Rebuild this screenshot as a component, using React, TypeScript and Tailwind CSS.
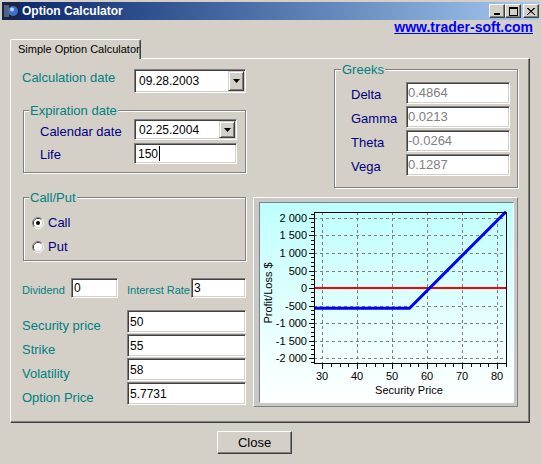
import React from 'react'

/** Sunken Win2000 edit box. */
function Edit({
  value,
  className = '',
  muted = false,
  caret = false,
}: {
  value: string
  className?: string
  muted?: boolean
  caret?: boolean
}) {
  return (
    <div
      className={`flex items-center border border-t-[#808080] border-l-[#808080] border-b-white border-r-white bg-white shadow-[inset_1px_1px_0_#404040,inset_-1px_-1px_0_#d4d0c8] ${
        muted ? 'text-[#808080]' : 'text-black'
      } ${className}`}
    >
      <span>{value}</span>
      {caret && <span className="ml-px h-[15px] w-px bg-black" />}
    </div>
  )
}

function Combo({ value, className = '' }: { value: string; className?: string }) {
  return (
    <div
      className={`flex items-stretch border border-t-[#808080] border-l-[#808080] border-b-white border-r-white bg-white p-px shadow-[inset_1px_1px_0_#404040,inset_-1px_-1px_0_#d4d0c8] ${className}`}
    >
      <span className="flex flex-1 items-center pl-[3px] text-[12px] text-black">{value}</span>
      <span className="flex w-[16px] items-center justify-center border border-t-[#d4d0c8] border-l-[#d4d0c8] border-r-[#404040] border-b-[#404040] bg-[#d4d0c8] shadow-[inset_1px_1px_0_#fff,inset_-1px_-1px_0_#808080]">
        <svg width="7" height="4" viewBox="0 0 7 4">
          <path d="M0 0h7L3.5 4z" fill="#000" />
        </svg>
      </span>
    </div>
  )
}

function Group({
  title,
  className = '',
  legendClass = 'ml-[5px]',
  children,
}: {
  title: string
  className?: string
  legendClass?: string
  children: React.ReactNode
}) {
  return (
    <div
      className={`flex flex-col border border-[#808080] shadow-[inset_1px_1px_0_#fff,1px_1px_0_#fff] ${className}`}
    >
      <span
        className={`-mt-[8px] w-fit bg-[#d4d0c8] px-px text-[13px] leading-[15px] text-[#008080] ${legendClass}`}
      >
        {title}
      </span>
      {children}
    </div>
  )
}

function Radio({ checked }: { checked?: boolean }) {
  return (
    <svg width="12" height="12" viewBox="0 0 12 12">
      <path d="M2.11 9.89A5.5 5.5 0 0 1 9.89 2.11" fill="none" stroke="#808080" />
      <path d="M9.89 2.11A5.5 5.5 0 0 1 2.11 9.89" fill="none" stroke="#fff" />
      <path d="M2.82 9.18A4.5 4.5 0 0 1 9.18 2.82" fill="none" stroke="#404040" />
      <path d="M9.18 2.82A4.5 4.5 0 0 1 2.82 9.18" fill="none" stroke="#d4d0c8" />
      <circle cx="6" cy="6" r="4" fill="#fff" />
      {checked && <circle cx="6" cy="6" r="2" fill="#000" />}
    </svg>
  )
}

function CaptionButton({ children }: { children: React.ReactNode }) {
  return (
    <div className="flex h-[14px] w-[16px] items-center justify-center border border-t-white border-l-white border-r-[#404040] border-b-[#404040] bg-[#d4d0c8] shadow-[inset_-1px_-1px_0_#808080]">
      {children}
    </div>
  )
}

function TitleBar() {
  return (
    <div className="mx-[2px] mt-[2px] flex h-[18px] items-center bg-linear-to-r from-[#0a246a] to-[#a6caf0] pl-px">
      <svg width="16" height="16" viewBox="0 0 16 16">
        <rect width="16" height="16" fill="#1d2536" />
        <rect x="1" y="2" width="5" height="12" fill="#56627a" />
        <circle cx="10" cy="8" r="5" fill="#3a6fd0" />
        <circle cx="9" cy="6.5" r="2" fill="#b8d4ff" />
      </svg>
      <span className="ml-[3px] text-[12px] leading-none font-bold text-white">Option Calculator</span>
      <div className="ml-auto flex">
        <CaptionButton>
          <svg width="8" height="7" viewBox="0 0 8 7">
            <rect x="1" y="5" width="6" height="2" fill="#000" />
          </svg>
        </CaptionButton>
        <CaptionButton>
          <svg width="9" height="9" viewBox="0 0 9 9">
            <path d="M0 0h9v9H0zM1 2v6h7V2z" fill="#000" fillRule="evenodd" />
          </svg>
        </CaptionButton>
        <div className="ml-[2px]">
          <CaptionButton>
            <svg width="8" height="7" viewBox="0 0 8 7">
              <path d="M0 0l8 7M1 0l7 7M8 0L0 7M7 0L0 7" stroke="#000" strokeWidth="1" />
            </svg>
          </CaptionButton>
        </div>
      </div>
    </div>
  )
}

function Chart() {
  const X = (v: number) => 62 + (v - 30) * 3.5
  const Y = (p: number) => 85 - p * 0.035
  const xs = [30, 40, 50, 60, 70, 80]
  const ys = [2000, 1500, 1000, 500, 0, -500, -1000, -1500, -2000]
  const yMinor: number[] = []
  for (let p = -2125; p <= 2125; p += 125) yMinor.push(p)
  const xMinor: number[] = []
  for (let v = 30; v <= 82.5; v += 2.5) xMinor.push(v)
  const fmt = (n: number) => {
    const a = Math.abs(n)
    const s = a >= 1000 ? `${Math.floor(a / 1000)} ${String(a % 1000).padStart(3, '0')}` : String(a)
    return (n < 0 ? '-' : '') + s
  }

  return (
    <svg width="253" height="199" viewBox="0 0 253 199" fontSize="11" shapeRendering="crispEdges">
      {/* grid */}
      {xs.map(v => (
        <line key={`gx${v}`} x1={X(v) + 0.5} x2={X(v) + 0.5} y1={9} y2={161} stroke="#808080" strokeDasharray="3 3" />
      ))}
      {ys.map(p => (
        <line key={`gy${p}`} x1={54} x2={247} y1={Math.round(Y(p)) + 0.5} y2={Math.round(Y(p)) + 0.5} stroke="#808080" strokeDasharray="3 3" />
      ))}
      {/* ticks */}
      {yMinor.map(p => (
        <line key={`ty${p}`} x1={p % 500 === 0 ? 49 : 51} x2={54} y1={Math.round(Y(p)) + 0.5} y2={Math.round(Y(p)) + 0.5} stroke="#000" />
      ))}
      {xMinor.map(v => (
        <line key={`tx${v}`} x1={Math.round(X(v)) + 0.5} x2={Math.round(X(v)) + 0.5} y1={161} y2={v % 10 === 0 ? 166 : 164} stroke="#000" />
      ))}
      {/* zero line */}
      <line x1={54} x2={247} y1={85} y2={85} stroke="#ff0000" strokeWidth="2" />
      {/* payoff */}
      <polyline
        points={`54,105.2 ${X(55)},105.2 246,8.7`}
        fill="none"
        stroke="#0000ff"
        strokeWidth="3"
        shapeRendering="auto"
      />
      <rect x="54.5" y="9.5" width="192" height="151" fill="none" stroke="#000" />
      {/* labels */}
      {ys.map(p => (
        <text key={`ly${p}`} x={47} y={Math.round(Y(p)) + 4} textAnchor="end" fill="#000">
          {fmt(p)}
        </text>
      ))}
      {xs.map(v => (
        <text key={`lx${v}`} x={X(v)} y={177} textAnchor="middle" fill="#000">
          {v}
        </text>
      ))}
      <text x={149} y={191} textAnchor="middle" fill="#000">
        Security Price
      </text>
      <text x={12} y={90} textAnchor="middle" fill="#000" transform="rotate(-90 12 90)">
        Profit/Loss $
      </text>
    </svg>
  )
}

export default function App() {
  return (
    <div className="flex h-[464px] w-[541px] flex-col overflow-hidden bg-[#d4d0c8] font-['Liberation_Sans',Arial,sans-serif] text-black">
      <TitleBar />

      {/* link row */}
      <div className="flex h-[19px] justify-end pt-px pr-[8px]">
        <a className="text-[14px] leading-[12px] font-bold text-[#0000ff] underline">www.trader-soft.com</a>
      </div>

      {/* tab strip */}
      <div className="relative z-10 -mb-px ml-[10px] flex h-[20px] w-[131px] items-center rounded-t-[2px] border-t border-r border-l border-t-white border-r-[#404040] border-l-white bg-[#d4d0c8] pl-[7px] text-[11px] shadow-[inset_-1px_0_0_#808080]">
        Simple Option Calculator
      </div>

      {/* tab panel */}
      <div className="ml-[10px] flex h-[365px] w-[520px] border border-t-white border-r-[#404040] border-b-[#404040] border-l-white pt-[10px] pl-[11px] shadow-[inset_-1px_-1px_0_#808080]">
        {/* left column */}
        <div className="flex w-[224px] flex-col">
          <div className="flex h-[24px]">
            <span className="w-[112px] pt-px text-[13px] leading-[15px] text-[#008080]">Calculation date</span>
            <Combo value="09.28.2003" className="h-[24px] w-[112px]" />
          </div>

          <Group title="Expiration date" className="mt-[17px] ml-px h-[63px] w-[223px]">
            <div className="mt-px flex h-[21px]">
              <span className="w-[110px] pt-[5px] pl-[16px] text-[13px] leading-[15px] text-[#000080]">Calendar date</span>
              <Combo value="02.25.2004" className="h-[21px] w-[103px]" />
            </div>
            <div className="mt-[3px] flex h-[21px]">
              <span className="w-[110px] pt-[4px] pl-[16px] text-[13px] leading-[15px] text-[#000080]">Life</span>
              <Edit value="150" caret className="h-[21px] w-[103px] pl-[3px] text-[12px]" />
            </div>
          </Group>

          <Group title="Call/Put" className="mt-[24px] ml-px h-[64px] w-[223px]">
            <div className="mt-[10px] flex h-[15px] items-center gap-[4px] pl-[8px]">
              <Radio checked />
              <span className="text-[13px] leading-[15px] text-[#000080]">Call</span>
            </div>
            <div className="mt-[9px] flex h-[15px] items-center gap-[4px] pl-[8px]">
              <Radio />
              <span className="text-[13px] leading-[15px] text-[#000080]">Put</span>
            </div>
          </Group>

          <div className="mt-[17px] flex h-[20px] items-start">
            <span className="w-[49px] pt-[6px] text-[11px] leading-[13px] text-[#008080]">Dividend</span>
            <Edit value="0" className="h-[20px] w-[47px] pl-[2px] text-[12px]" />
            <span className="ml-[9px] w-[64px] pt-[6px] text-[11px] leading-[13px] text-[#008080]">Interest Rate</span>
            <Edit value="3" className="h-[20px] w-[55px] pl-[2px] text-[12px]" />
          </div>

          <div className="mt-[12px] flex flex-col gap-px">
            {[
              ['Security price', '50'],
              ['Strike', '55'],
              ['Volatility', '58'],
              ['Option Price', '5.7731'],
            ].map(([label, value]) => (
              <div key={label} className="flex h-[23px] items-start">
                <span className="w-[105px] pt-[8px] text-[13px] leading-[15px] text-[#008080]">{label}</span>
                <Edit value={value} className="h-[23px] w-[119px] pl-[2px] text-[12px]" />
              </div>
            ))}
          </div>
        </div>

        {/* right column */}
        <div className="ml-[7px] flex w-[265px] flex-col">
          <Group title="Greeks" legendClass="ml-[6px]" className="h-[119px] w-[184px] self-end">
            <div className="mt-[5px] flex flex-col gap-[2px]">
              {[
                ['Delta', '0.4864'],
                ['Gamma', '0.0213'],
                ['Theta', '-0.0264'],
                ['Vega', '0.1287'],
              ].map(([label, value]) => (
                <div key={label} className="flex h-[22px]">
                  <span className="w-[71px] pt-[5px] pl-[16px] text-[13px] leading-[15px] text-[#000080]">{label}</span>
                  <Edit value={value} muted className="h-[22px] w-[104px] pl-px text-[13px]" />
                </div>
              ))}
            </div>
          </Group>

          <div className="mt-[9px] h-[210px] w-[265px] border border-t-white border-r-[#808080] border-b-[#808080] border-l-white bg-[#c8c8c8] pt-[4px] pr-[3px] pb-[3px] pl-[5px]">
            <div className="h-[201px] w-[255px] border border-t-[#808080] border-r-white border-b-white border-l-[#808080] bg-linear-to-b from-[#bdffff] to-white">
              <Chart />
            </div>
          </div>
        </div>
      </div>

      <button className="mt-[8px] ml-[217px] flex h-[23px] w-[75px] items-center justify-center border border-t-white border-r-[#404040] border-b-[#404040] border-l-white bg-[#d4d0c8] text-[13px] text-black shadow-[inset_-1px_-1px_0_#808080]">
        Close
      </button>
    </div>
  )
}
